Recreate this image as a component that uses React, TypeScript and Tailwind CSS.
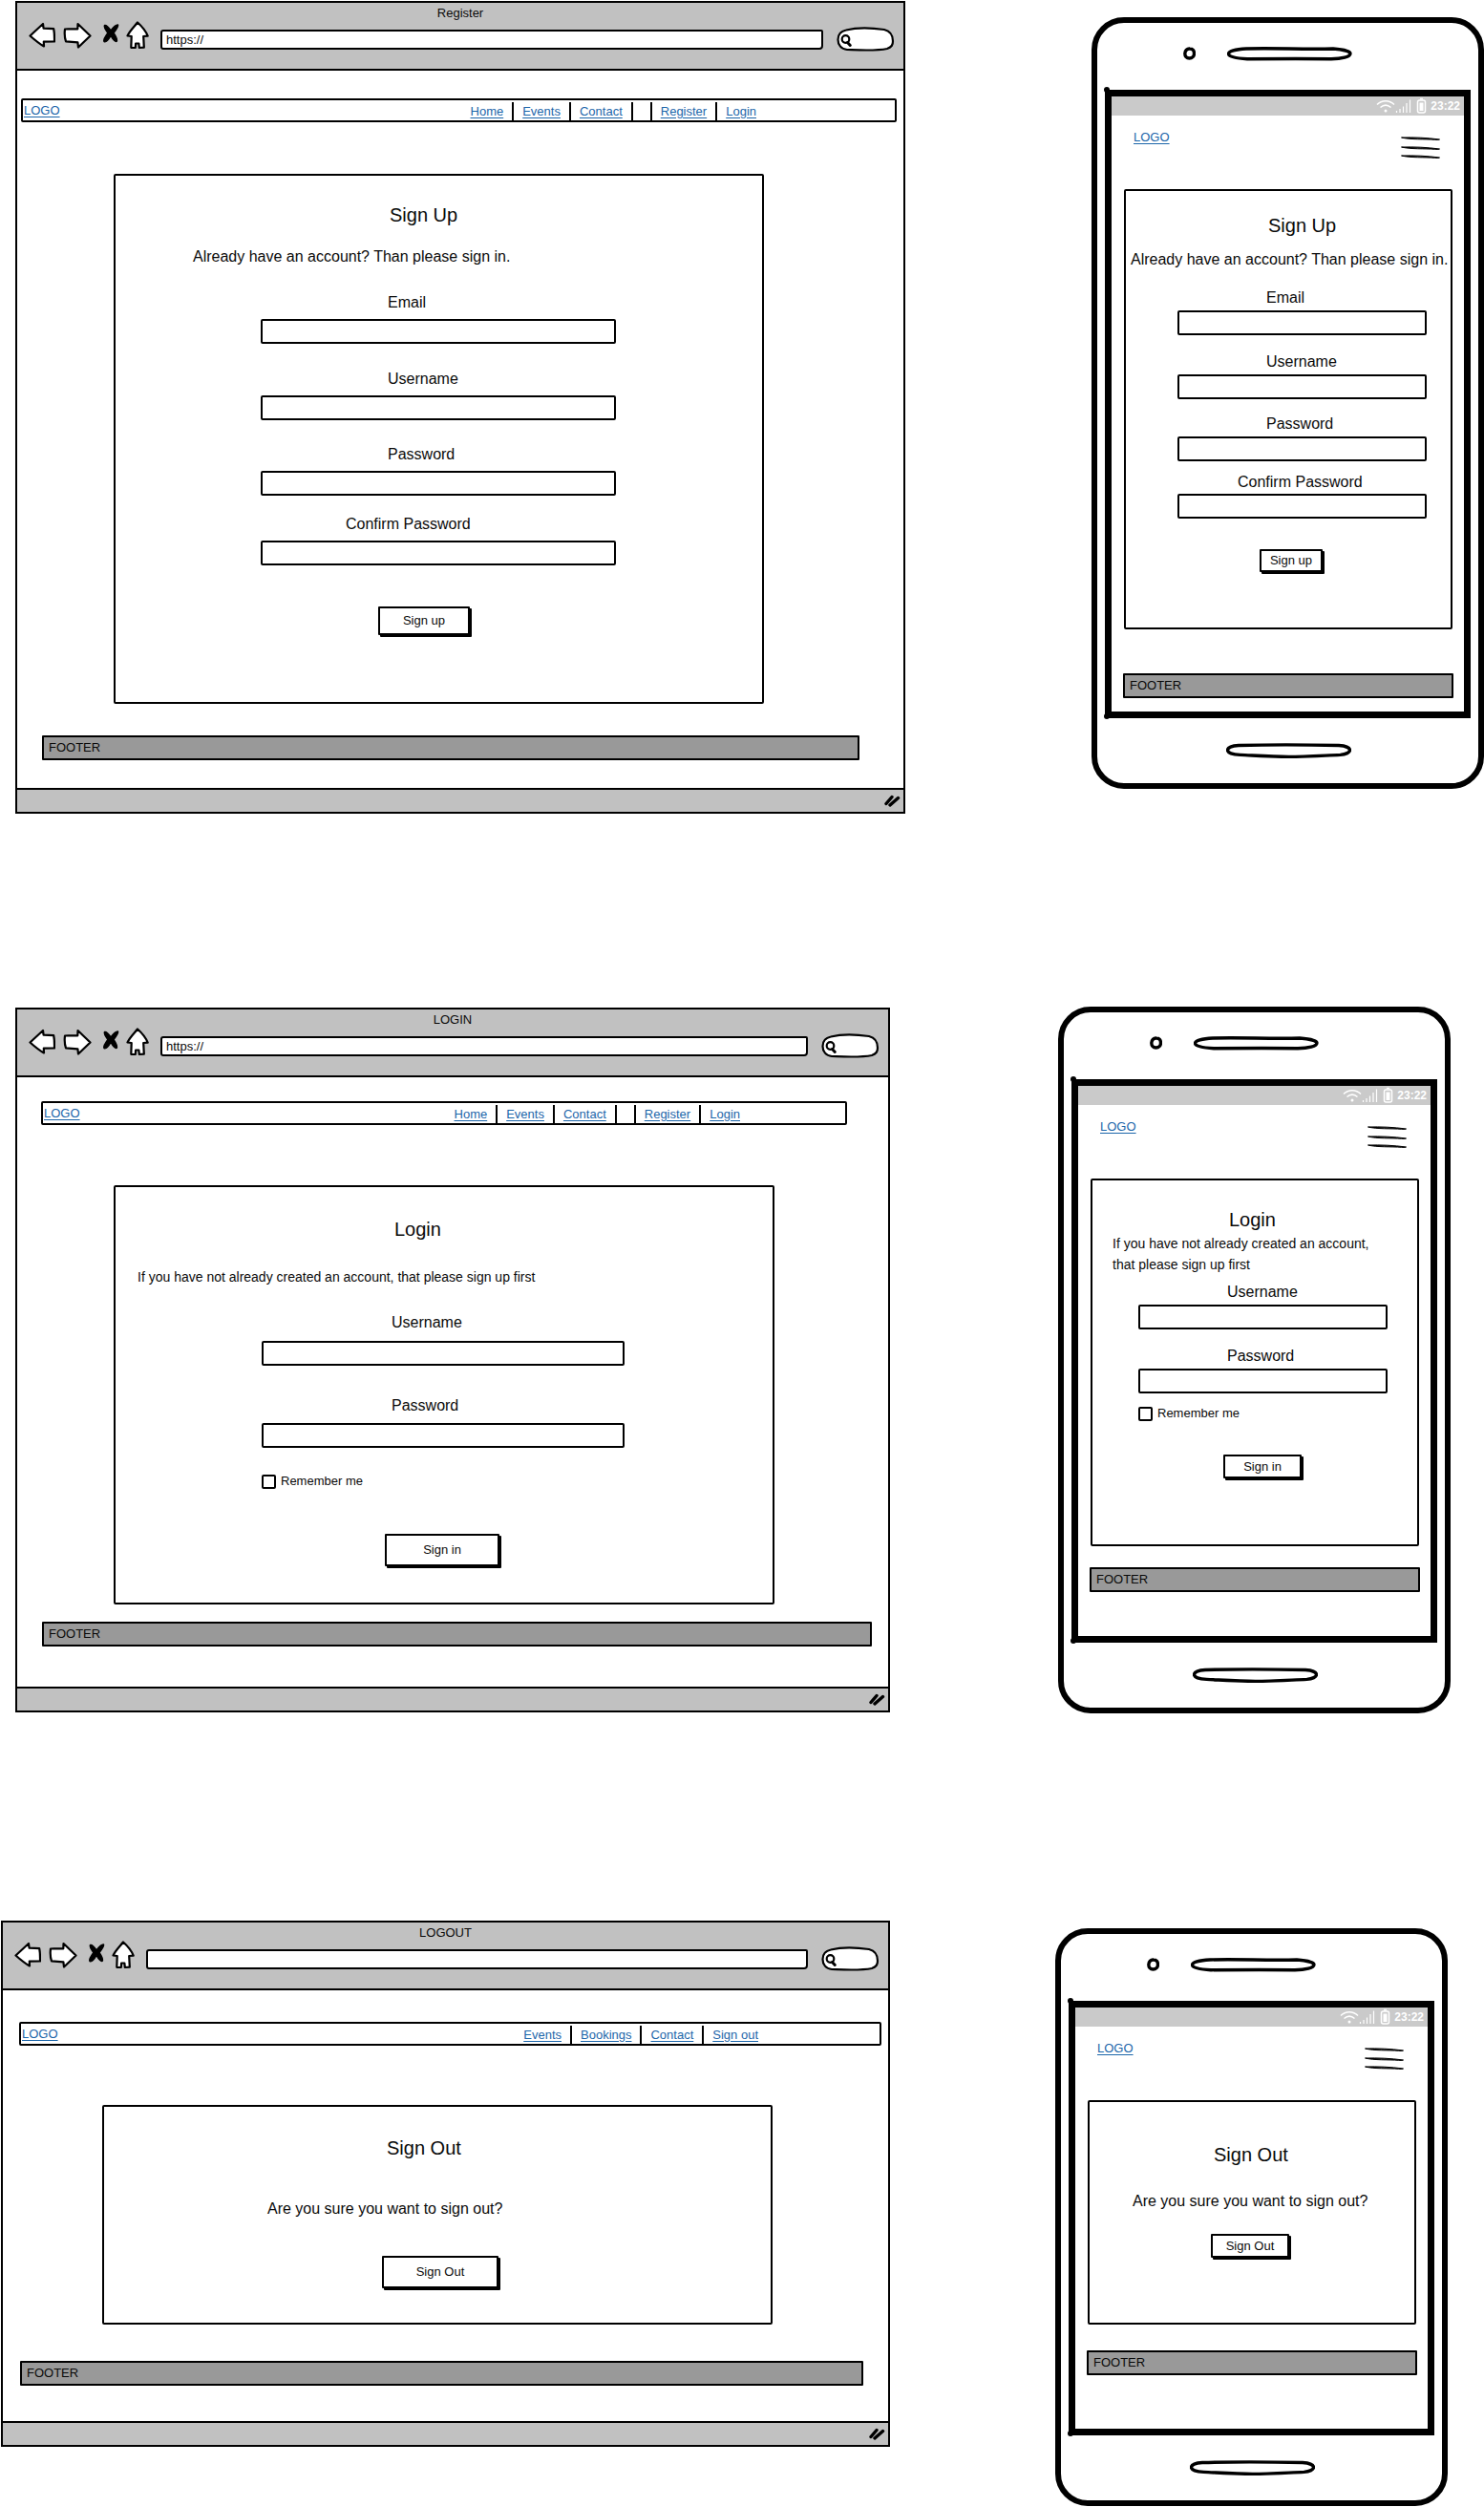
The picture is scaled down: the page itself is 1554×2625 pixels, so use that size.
import React, { ReactNode } from "react";

/* ---------- hand-drawn icons ---------- */

const stroke = {
  fill: "#fff",
  stroke: "#000",
  strokeWidth: 2.2,
  strokeLinejoin: "round" as const,
  strokeLinecap: "round" as const,
};

function BackIcon() {
  return (
    <svg width="28" height="28" viewBox="0 0 28 28" aria-hidden="true" {...stroke}>
      <path d="M1.5 14.5 15 2l.6 4.6 10.6.6c1 4.600.8 9 .8 13.300l-11.200.100.200 4.900C10.500 22.500 6 18.500 1.500 14.500Z" />
    </svg>
  );
}

function ForwardIcon() {
  return (
    <svg width="30" height="28" viewBox="0 0 30 28" aria-hidden="true" {...stroke}>
      <path d="M2 7.500c4.500-.5 8.500.3 13.300-.2L15.500 2 28.500 14.500 16 26.500l-.6-5.200L3 20.300C1.300 15.500 1.500 11.500 2 7.500Z" />
    </svg>
  );
}

function StopIcon() {
  return (
    <svg width="18" height="20" viewBox="0 0 18 20" aria-hidden="true" fill="#000" stroke="#000" strokeWidth="1.4" strokeLinejoin="round">
      <path d="M2.600 1.500C4.500 1 7 4 9 7c2.300-3 5-6.500 7.500-6 .8 2-2.500 6-4.500 8.500 2 3 4 7 3.300 8.600-1 1.700-4.300-2-6.300-5.600-2 3.500-5 7-6.800 6.200C.200 16.500 4 12.500 5.800 9.500 4 6.500 1 3 2.600 1.500Z" />
    </svg>
  );
}

function HomeIcon() {
  return (
    <svg width="24" height="30" viewBox="0 0 24 30" aria-hidden="true" {...stroke}>
      <path d="M12 1.500C9 5.500 4 10 1.500 15.500l4.200.5-.4 11.800 4.500.2.300-4.500h3.300l.4 4.500 5-.4-.6-11.600 4.500-.3C20.500 10 16.500 5.500 12 1.500Z" />
    </svg>
  );
}

function SearchPill() {
  return (
    <svg width="61" height="26" viewBox="0 0 61 26" aria-hidden="true" {...stroke}>
      <path d="M10 3.500C20 1 36 1 50 3c6 1.500 9 5 9 12 0 4-1 6-6 8-12 2.500-28 1.500-42 1C5 23.500 1.500 19 1.500 13.500 1.500 8 5 4.500 10 3.500Z" />
      <ellipse cx="9.500" cy="13" rx="3.800" ry="3.800" />
      <path d="m11.500 16.500 2.800 3" strokeWidth="3" />
    </svg>
  );
}

function ResizeGrip() {
  return (
    <svg width="17" height="13" viewBox="0 0 17 13" aria-hidden="true" stroke="#000" strokeWidth="3.400" strokeLinecap="round">
      <path d="M2 9.500 8 2.500M6 11 14.500 3.500" fill="none" />
    </svg>
  );
}

function SpeakerSlot() {
  return (
    <svg width="131" height="15" viewBox="0 0 131 15" aria-hidden="true" fill="#fff" stroke="#000" strokeWidth="3.400">
      <path d="M20 2c30-.8 60 .8 91 0 11 .8 18 3 18 5 0 3.500-9 5.700-20 5.700-30-.4-60-.2-88 0C8 12 1.500 10 1.500 7.500 1.500 4.500 9 2.500 20 2Z" />
    </svg>
  );
}

function HomeSlot() {
  return (
    <svg width="131" height="16" viewBox="0 0 131 16" aria-hidden="true" fill="#fff" stroke="#000" strokeWidth="3.400">
      <path d="M13 2.500c35-1 70-.8 105 0 8 .5 11.500 2.800 11.500 5s-4 4.500-10 4.900c-19 .8-38 2-54 2s-34-1.200-51-2c-8-.4-13-2.400-13-4.900s4-4.600 11.500-5Z" />
    </svg>
  );
}

function Camera() {
  return (
    <svg width="13" height="14" viewBox="0 0 13 14" aria-hidden="true" fill="#fff" stroke="#000" strokeWidth="3.400">
      <path d="M7 2C4 1.700 2 4 1.800 7c0 3 1.700 5 4.700 5s5-2 5-5-1.500-5-4.500-5Z" />
    </svg>
  );
}

function StatusIcons() {
  return (
    <svg width="53" height="18" viewBox="0 0 53 18" aria-hidden="true" fill="none" stroke="#fff">
      <path d="M1 7.500C6 2.500 14 2.500 19 7.500M4.500 10.500c3.500-3 7.500-3 11 0" strokeWidth="1.500" />
      <circle cx="10" cy="14" r="1.500" fill="#fff" stroke="none" />
      <path d="M21.500 16v-2M25 16v-4M28.500 16V9.500M32 16V6M35.500 16V2.500" strokeWidth="1.200" />
      <rect x="43.500" y="3" width="8" height="13" rx="2" strokeWidth="1.500" />
      <path d="M46 1.500h3" strokeWidth="1.500" />
      <rect x="45.500" y="5.500" width="4" height="8.500" fill="#fff" stroke="none" />
    </svg>
  );
}

function BurgerIcon() {
  return (
    <svg width="41" height="24" viewBox="0 0 41 24" aria-hidden="true" fill="#000" stroke="#000" strokeWidth="1">
      <path d="M.500 1c13-.4 27 .200 40 2-1 .7-3 .3-5 .3C25 2.500 10 3.400.500 1Z" />
      <path d="M.500 11c13-.4 27 .200 40 2-1 .7-3 .3-5 .3C25 12.500 10 13.400.500 11Z" />
      <path d="M.500 20c13-.4 27 .200 40 2-1 .7-3 .3-5 .3C25 21.500 10 22.400.500 20Z" />
    </svg>
  );
}

/* ---------- shared pieces ---------- */

function Link({ children }: { children: ReactNode }) {
  return (
    <a href="#" className="text-[13px] leading-4 text-[#1c66aa] underline underline-offset-2">
      {children}
    </a>
  );
}

function NavBar({ items, className, listClass }: { items: string[]; className: string; listClass: string }) {
  return (
    <nav className={`flex h-[25px] items-center rounded-[2px] border-2 border-black pl-px ${className}`}>
      <Link>LOGO</Link>
      <ul className={`ml-auto flex h-full items-end ${listClass}`}>
        {items.map((item, i) => (
          <li
            key={i}
            className={`flex h-[19px] items-center px-[9px] ${i > 0 ? "border-l-2 border-black" : ""}`}
          >
            {item && <Link>{item}</Link>}
          </li>
        ))}
      </ul>
    </nav>
  );
}

function Card({ className, children }: { className: string; children: ReactNode }) {
  return (
    <form
      onSubmit={(e) => e.preventDefault()}
      className={`flex flex-col items-start rounded-[2px] border-2 border-black ${className}`}
    >
      {children}
    </form>
  );
}

function Title({ className, children }: { className: string; children: ReactNode }) {
  return <h2 className={`text-xl leading-6 ${className}`}>{children}</h2>;
}

function Field({
  id,
  label,
  type = "text",
  labelClass,
  inputClass,
}: {
  id: string;
  label: string;
  type?: string;
  labelClass: string;
  inputClass: string;
}) {
  return (
    <>
      <label htmlFor={id} className={`text-base leading-5 ${labelClass}`}>
        {label}
      </label>
      <input
        id={id}
        type={type}
        className={`h-[26px] min-w-0 self-stretch rounded-[2px] border-2 border-black bg-white px-2 text-sm ${inputClass}`}
      />
    </>
  );
}

function Remember({ id, className }: { id: string; className: string }) {
  return (
    <div className={`flex h-4 items-center gap-[5px] ${className}`}>
      <input id={id} type="checkbox" className="size-[15px] appearance-none rounded-[2px] border-2 border-black checked:bg-black" />
      <label htmlFor={id} className="text-[13px] leading-4">
        Remember me
      </label>
    </div>
  );
}

function SketchButton({ className, children }: { className: string; children: ReactNode }) {
  return (
    <button
      type="submit"
      className={`rounded-[1px] border-2 border-black bg-white text-[13px] leading-4 shadow-[2px_2px_0_#000] ${className}`}
    >
      {children}
    </button>
  );
}

function Footer({ className }: { className: string }) {
  return (
    <footer
      className={`flex h-[26px] items-center rounded-[1px] border-2 border-black bg-[#999] pl-[5px] text-[13px] leading-4 ${className}`}
    >
      FOOTER
    </footer>
  );
}

/* ---------- device frames ---------- */

function BrowserFrame({ title, url, className, children }: { title: string; url: string; className?: string; children: ReactNode }) {
  return (
    <section aria-label={title} className={`flex min-w-0 flex-1 flex-col border-2 border-black bg-white ${className ?? ""}`}>
      <header className="h-[71px] border-b-2 border-black bg-[#c1c1c1]">
        <h1 className="pt-[3px] text-center text-[13px] leading-4">{title}</h1>
        <div className="flex h-[30px] items-center pr-[9px] pl-3">
          <button type="button" aria-label="Back"><BackIcon /></button>
          <button type="button" aria-label="Forward" className="ml-2"><ForwardIcon /></button>
          <button type="button" aria-label="Stop" className="mb-1 ml-[11px]"><StopIcon /></button>
          <button type="button" aria-label="Home" className="ml-[7px]"><HomeIcon /></button>
          <input
            type="text"
            aria-label="Address"
            defaultValue={url}
            className="mt-2 ml-3 h-[21px] min-w-0 flex-1 rounded-[3px_2px_4px_3px] border-2 border-black bg-white px-1 text-[13px] leading-4"
          />
          <button type="button" aria-label="Search" className="mt-2 ml-[14px]"><SearchPill /></button>
        </div>
      </header>
      {children}
      <div className="flex h-[25px] items-center justify-end border-t-2 border-black bg-[#c1c1c1] pr-[3px]">
        <ResizeGrip />
      </div>
    </section>
  );
}

function PhoneFrame({ label, className, children }: { label: string; className?: string; children: ReactNode }) {
  return (
    <section
      aria-label={label}
      className={`w-full max-w-[411px] shrink-0 rounded-[34px] border-[6px] border-black bg-white px-2 ${className ?? ""}`}
    >
      <div className="grid h-[70px] grid-cols-[1fr_auto_1fr] pt-[25px] pl-1">
        <div className="flex justify-end pr-[33px]"><Camera /></div>
        <SpeakerSlot />
      </div>
      <div className="relative border-[7px] border-black">
        <span className="absolute -top-[10px] -left-[8px] size-[6px] rounded-full bg-black" />
        <span className="absolute -bottom-[8px] -left-[8px] size-[6px] rounded-full bg-black" />
        <div className="flex h-5 items-center justify-end gap-1 bg-[#cacaca] pr-1 text-xs font-bold text-white">
          <StatusIcons />
          23:22
        </div>
        <div className="flex h-[77px] items-start justify-between pr-[25px] pl-[23px]">
          <div className="flex pt-[15px]"><Link>LOGO</Link></div>
          <button type="button" aria-label="Menu" className="mt-[22px]"><BurgerIcon /></button>
        </div>
        {children}
      </div>
      <div className="flex h-[68px] justify-center pt-[26px] pl-[2px]"><HomeSlot /></div>
    </section>
  );
}

const guestNav = ["Home", "Events", "Contact", "", "Register", "Login"];
const memberNav = ["Events", "Bookings", "Contact", "Sign out"];

export default function App() {
  return (
    <main className="bg-white pt-px font-['Liberation_Sans',Arial,sans-serif] text-[#0a0a0a]">
      {/* Register */}
      <div className="flex flex-col items-start gap-8 pl-4 lg:flex-row lg:gap-[195px]">
        <BrowserFrame title="Register" url="https://" className="w-full lg:w-auto">
          <NavBar items={guestNav} className="mt-[29px] mr-[7px] ml-1" listClass="mr-[136px]" />
          <Card className="mt-[54px] mr-[146px] ml-[101px] pb-[70px]">
            <Title className="mt-[29px] ml-[287px]">Sign Up</Title>
            <p className="mt-[22px] ml-[81px] text-base leading-5">Already have an account? Than please sign in.</p>
            <Field id="reg-email" label="Email" type="email" labelClass="mt-7 ml-[285px]" inputClass="mt-[7px] mr-[153px] ml-[152px]" />
            <Field id="reg-user" label="Username" labelClass="mt-[27px] ml-[285px]" inputClass="mt-[7px] mr-[153px] ml-[152px]" />
            <Field id="reg-pass" label="Password" type="password" labelClass="mt-[26px] ml-[285px]" inputClass="mt-[7px] mr-[153px] ml-[152px]" />
            <Field id="reg-confirm" label="Confirm Password" type="password" labelClass="mt-5 ml-[241px]" inputClass="mt-[7px] mr-[153px] ml-[152px]" />
            <SketchButton className="mt-[43px] ml-[275px] h-[30px] w-[96px]">Sign up</SketchButton>
          </Card>
          <Footer className="mt-[33px] mr-[46px] mb-[29px] ml-[26px]" />
        </BrowserFrame>

        <PhoneFrame label="Register on a phone" className="lg:mt-[17px]">
          <Card className="mr-3 ml-[13px] pb-[58px]">
            <Title className="mt-6 ml-[149px]">Sign Up</Title>
            <p className="mt-[14px] ml-[5px] text-base leading-5 whitespace-nowrap">Already have an account? Than please sign in.</p>
            <Field id="reg-m-email" label="Email" type="email" labelClass="mt-5 ml-[147px]" inputClass="mt-[3px] mr-[25px] ml-[54px]" />
            <Field id="reg-m-user" label="Username" labelClass="mt-[18px] ml-[147px]" inputClass="mt-[3px] mr-[25px] ml-[54px]" />
            <Field id="reg-m-pass" label="Password" type="password" labelClass="mt-4 ml-[147px]" inputClass="mt-[3px] mr-[25px] ml-[54px]" />
            <Field id="reg-m-confirm" label="Confirm Password" type="password" labelClass="mt-3 ml-[117px]" inputClass="mt-[2px] mr-[25px] ml-[54px]" />
            <SketchButton className="mt-8 ml-[140px] h-6 w-[66px]">Sign up</SketchButton>
          </Card>
          <Footer className="mt-[46px] mr-[11px] mb-[14px] ml-3" />
        </PhoneFrame>
      </div>

      {/* Login */}
      <div className="mt-[202px] flex flex-col items-start gap-8 pl-4 lg:flex-row lg:gap-[176px] lg:pr-[35px]">
        <BrowserFrame title="LOGIN" url="https://" className="w-full lg:mt-px lg:w-auto">
          <NavBar items={guestNav} className="mt-[25px] mr-[43px] ml-[25px]" listClass="mr-[101px]" />
          <Card className="mt-[63px] mr-[119px] ml-[101px] pb-[38px]">
            <Title className="mt-8 ml-[292px]">Login</Title>
            <p className="mt-7 ml-[23px] text-sm leading-5">If you have not already created an account, that please sign up first</p>
            <Field id="log-user" label="Username" labelClass="mt-7 ml-[289px]" inputClass="mt-[9px] mr-[155px] ml-[153px]" />
            <Field id="log-pass" label="Password" type="password" labelClass="mt-8 ml-[289px]" inputClass="mt-2 mr-[155px] ml-[153px]" />
            <Remember id="log-remember" className="mt-[27px] ml-[153px]" />
            <SketchButton className="mt-[47px] ml-[282px] h-[34px] w-[120px]">Sign in</SketchButton>
          </Card>
          <Footer className="mt-[18px] mr-[17px] mb-[42px] ml-[26px]" />
        </BrowserFrame>

        <PhoneFrame label="Login on a phone">
          <Card className="mr-3 ml-[13px] pb-[69px]">
            <Title className="mt-[29px] ml-[143px]">Login</Title>
            <p className="mt-[2px] ml-[21px] text-sm leading-[22px]">
              If you have not already created an account,
              <br />
              that please sign up first
            </p>
            <Field id="log-m-user" label="Username" labelClass="mt-2 ml-[141px]" inputClass="mt-[3px] mr-[31px] ml-12" />
            <Field id="log-m-pass" label="Password" type="password" labelClass="mt-[18px] ml-[141px]" inputClass="mt-[3px] mr-[31px] ml-12" />
            <Remember id="log-m-remember" className="mt-[13px] ml-12" />
            <SketchButton className="mt-[35px] ml-[137px] h-[25px] w-[82px]">Sign in</SketchButton>
          </Card>
          <Footer className="mt-[22px] mr-[11px] mb-[46px] ml-3" />
        </PhoneFrame>
      </div>

      {/* Logout */}
      <div className="mt-[217px] flex flex-col items-start gap-8 pl-px lg:flex-row lg:gap-[173px] lg:pr-[38px]">
        <BrowserFrame title="LOGOUT" url="" className="w-full lg:w-auto">
          <NavBar items={memberNav} className="mt-[33px] mr-[7px] ml-[17px]" listClass="mr-[118px]" />
          <Card className="mt-[62px] mr-[121px] ml-[104px] pb-9">
            <Title className="mt-[31px] ml-[296px]">Sign Out</Title>
            <p className="mt-[42px] ml-[171px] text-base leading-5">Are you sure you want to sign out?</p>
            <SketchButton className="mt-[39px] ml-[291px] h-[34px] w-[122px]">Sign Out</SketchButton>
          </Card>
          <Footer className="mt-[38px] mr-[26px] mb-[37px] ml-[18px]" />
        </BrowserFrame>

        <PhoneFrame label="Logout on a phone" className="lg:mt-2">
          <Card className="mr-3 ml-[13px] pb-[68px]">
            <Title className="mt-[43px] ml-[130px]">Sign Out</Title>
            <p className="mt-[27px] ml-[45px] text-base leading-5">Are you sure you want to sign out?</p>
            <SketchButton className="mt-6 ml-[127px] h-[25px] w-[82px]">Sign Out</SketchButton>
          </Card>
          <Footer className="mt-[27px] mr-[11px] mb-14 ml-3" />
        </PhoneFrame>
      </div>
    </main>
  );
}
